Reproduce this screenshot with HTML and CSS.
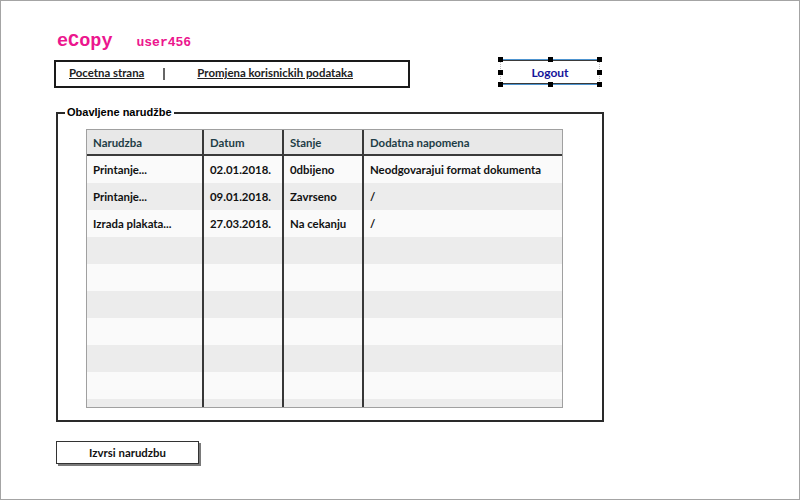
FILE: index.html
```html
<!DOCTYPE html>
<html lang="hr">
<head>
<meta charset="utf-8">
<title>eCopy</title>
<link rel="stylesheet" href="styles.css">
</head>
<body>
<div class="frame">
  <header class="brand">
    <span class="logo">eCopy</span>
    <span class="user">user456</span>
  </header>
  <div class="toolbar">
    <nav class="nav">
      <a class="nav-link" href="#">Pocetna strana</a>
      <span class="sep"></span>
      <a class="nav-link" href="#">Promjena korisnickih podataka</a>
    </nav>
    <div class="logout">
      <span class="logout-label">Logout</span>
      <i class="handle h-tl"></i><i class="handle h-tm"></i><i class="handle h-tr"></i>
      <i class="handle h-ml"></i><i class="handle h-mr"></i>
      <i class="handle h-bl"></i><i class="handle h-bm"></i><i class="handle h-br"></i>
    </div>
  </div>
  <fieldset class="orders">
    <legend class="orders-title">Obavljene narudžbe</legend>
    <div class="grid-wrap">
      <div class="row head">
        <div class="cell">Narudzba</div><div class="cell">Datum</div><div class="cell">Stanje</div><div class="cell">Dodatna napomena</div>
      </div>
      <div class="row">
        <div class="cell">Printanje...</div><div class="cell">02.01.2018.</div><div class="cell">0dbijeno</div><div class="cell">Neodgovarajui format dokumenta</div>
      </div>
      <div class="row alt">
        <div class="cell">Printanje...</div><div class="cell">09.01.2018.</div><div class="cell">Zavrseno</div><div class="cell">/</div>
      </div>
      <div class="row">
        <div class="cell">Izrada plakata...</div><div class="cell">27.03.2018.</div><div class="cell">Na cekanju</div><div class="cell">/</div>
      </div>
      <div class="row alt"><div class="cell"></div><div class="cell"></div><div class="cell"></div><div class="cell"></div></div>
      <div class="row"><div class="cell"></div><div class="cell"></div><div class="cell"></div><div class="cell"></div></div>
      <div class="row alt"><div class="cell"></div><div class="cell"></div><div class="cell"></div><div class="cell"></div></div>
      <div class="row"><div class="cell"></div><div class="cell"></div><div class="cell"></div><div class="cell"></div></div>
      <div class="row alt"><div class="cell"></div><div class="cell"></div><div class="cell"></div><div class="cell"></div></div>
      <div class="row"><div class="cell"></div><div class="cell"></div><div class="cell"></div><div class="cell"></div></div>
      <div class="row alt"><div class="cell"></div><div class="cell"></div><div class="cell"></div><div class="cell"></div></div>
    </div>
  </fieldset>
  <button class="submit" type="button">Izvrsi narudzbu</button>
</div>
</body>
</html>
```

FILE: styles.css
```css
* { box-sizing: border-box; }
html, body { margin: 0; padding: 0; background: #fff; }
.frame {
  width: 800px;
  height: 500px;
  border: 1px solid #a4a4a4;
  padding: 31px 0 0 53px;
  font-family: Lato, "Open Sans", sans-serif;
  color: #111;
  overflow: hidden;
}
.brand {
  display: flex;
  align-items: baseline;
  height: 20px;
  line-height: 20px;
  margin-left: 3px;
  color: #ec168e;
  font-family: "Liberation Mono", "DejaVu Sans Mono", monospace;
  font-weight: bold;
}
.logo { font-size: 18.5px; }
.user { font-size: 13px; margin-left: 24px; }

.toolbar {
  display: flex;
  align-items: flex-start;
  margin-top: 8px;
}
.nav {
  display: flex;
  align-items: center;
  width: 356px;
  height: 28px;
  border: 2px solid #1a1a1a;
  padding: 0 0 3px 13px;
  font-size: 11.4px;
  font-weight: 700;
}
.nav-link { color: #222; text-decoration: underline; }
.sep {
  width: 2px;
  height: 12px;
  margin: 3px 32px 0 19px;
  background: #666;
}

.logout {
  position: relative;
  width: 100px;
  height: 26px;
  margin-left: 90px;
  margin-top: -1px;
  display: flex;
  align-items: center;
  justify-content: center;
  border-top: 1px solid #4d94d0;
  border-bottom: 1px solid #4d94d0;
  border-left: 1px dotted #bbb;
  border-right: 1px dotted #bbb;
  box-shadow: inset 0 1px 0 #3a3a3a, inset 0 -1px 0 #3a3a3a;
}
.logout-label { color: #14149a; font-size: 12px; font-weight: 700; }
.handle {
  position: absolute;
  width: 5px;
  height: 5px;
  background: #000;
}
.h-tl { left: -3px; top: -3px; }
.h-tm { left: 47px; top: -3px; }
.h-tr { right: -3px; top: -3px; }
.h-ml { left: -3px; top: 10px; }
.h-mr { right: -3px; top: 10px; }
.h-bl { left: -3px; bottom: -3px; }
.h-bm { left: 47px; bottom: -3px; }
.h-br { right: -3px; bottom: -3px; }

.orders {
  width: 548px;
  margin: 18px 0 0 2px;
  padding: 0 0 12px 28px;
  border: 2px solid #2a2a2a;
  min-width: 0;
}
.orders-title {
  margin-left: -21px;
  padding: 0 2px;
  font-family: "Liberation Sans", Arial, sans-serif;
  font-size: 11px;
  font-weight: bold;
  line-height: 13px;
  color: #000;
}
.grid-wrap {
  width: 477px;
  height: 279px;
  margin-top: 10px;
  border: 1px solid #a0a0a0;
  overflow: hidden;
}
.row {
  display: grid;
  grid-template-columns: 117px 80px 80px 1fr;
  height: 27px;
  background: #fafafa;
  font-size: 11.4px;
  font-weight: 700;
}
.row.alt { background: #ececec; }
.row.head {
  height: 26px;
  background: #e8e8e8;
  border-bottom: 2px solid #3a3a3a;
  color: #1e3d46;
}
.cell {
  display: flex;
  align-items: center;
  padding-left: 6px;
  border-right: 2px solid #383838;
  white-space: nowrap;
}
.cell:last-child { border-right: 0; }

.submit {
  display: block;
  width: 143px;
  height: 23px;
  margin: 19px 0 0 2px;
  background: #fff;
  border: 1px solid #333;
  box-shadow: 2px 2px 0 #7a7a7a;
  font-family: Lato, "Open Sans", sans-serif;
  font-size: 11.4px;
  font-weight: 700;
  color: #111;
  padding: 0;
}
```
